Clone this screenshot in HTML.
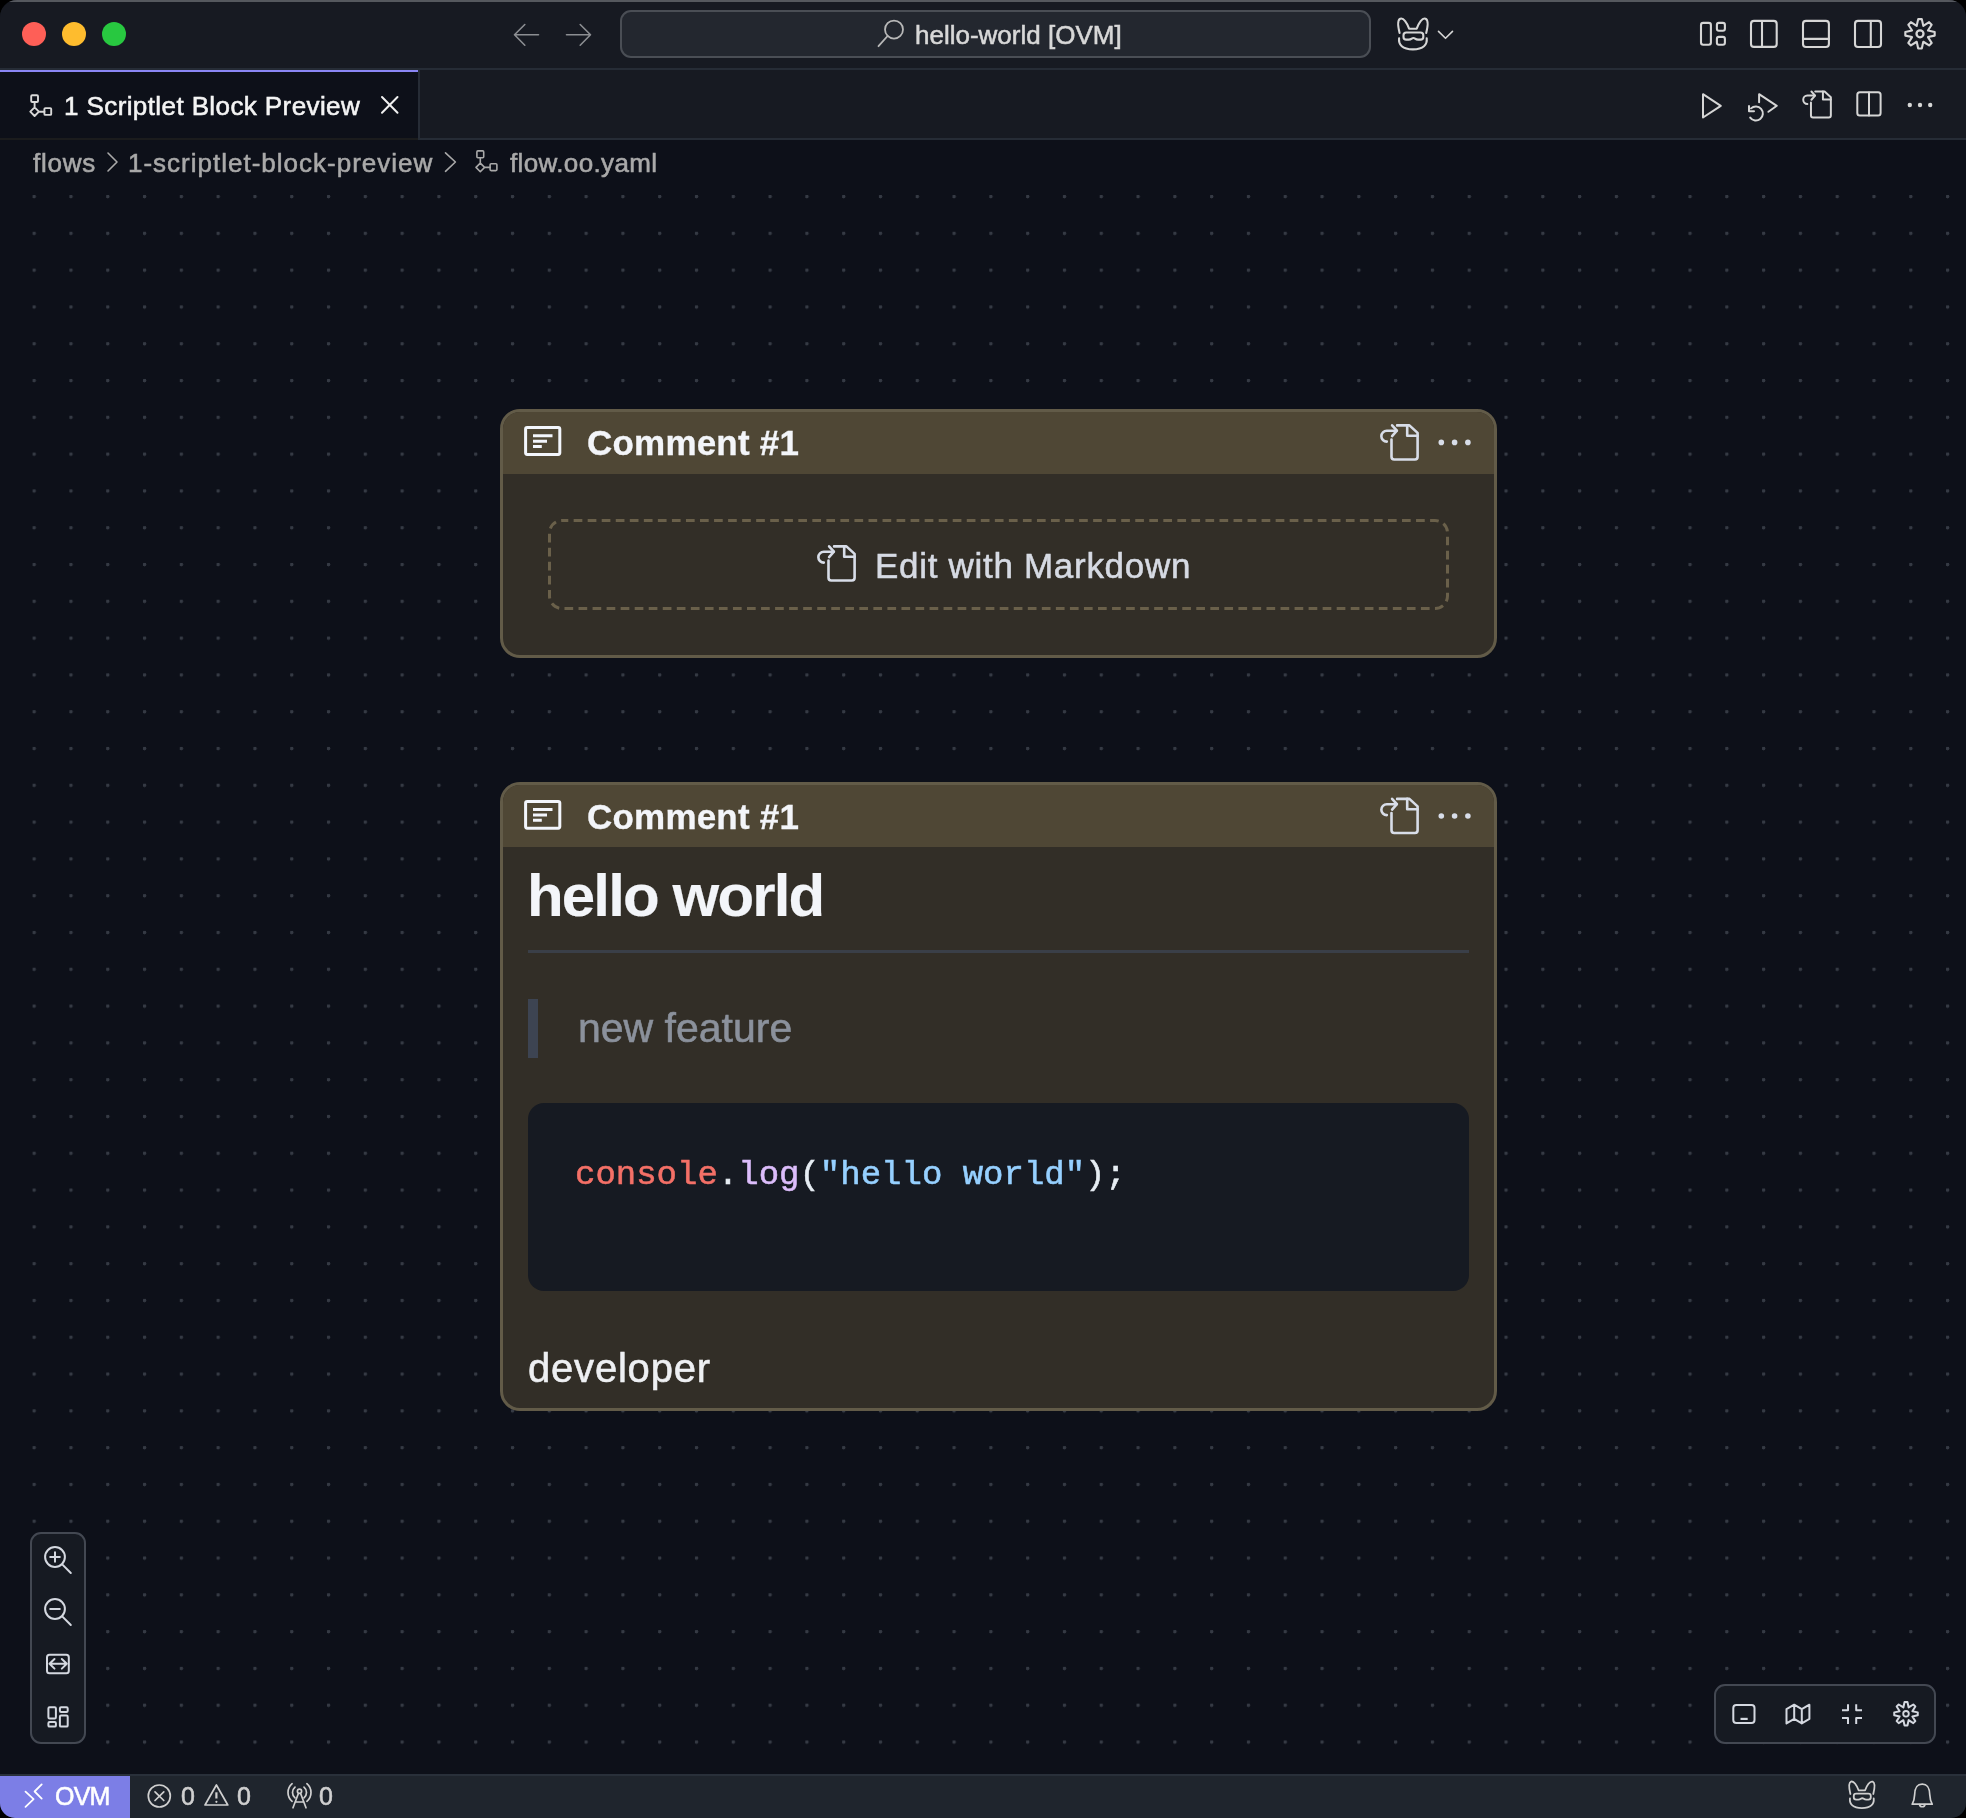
<!DOCTYPE html>
<html><head><meta charset="utf-8">
<style>
*{margin:0;padding:0;box-sizing:border-box}
html,body{width:1966px;height:1818px;background:#000;overflow:hidden;font-family:"Liberation Sans",sans-serif}
.win{position:absolute;left:0;top:0;width:1966px;height:1818px;border-radius:17px 17px 15px 15px;overflow:hidden;background:#0d1019}
.abs{position:absolute}
.t{position:absolute;white-space:pre;line-height:1;-webkit-text-stroke:0.55px currentColor;will-change:transform}
#ov{position:absolute;left:0;top:0;width:1966px;height:1818px}
.s{fill:none;stroke-linecap:round;stroke-linejoin:round}
</style></head><body>
<div class="win">
  <!-- title bar -->
  <div class="abs" style="left:0;top:0;width:1966px;height:68px;background:#171a22"></div>
  <div class="abs" style="left:0;top:0;width:1966px;height:2px;background:#55585e"></div>
  <div class="abs" style="left:22px;top:22px;width:24px;height:24px;border-radius:50%;background:#fe5f57"></div>
  <div class="abs" style="left:62px;top:22px;width:24px;height:24px;border-radius:50%;background:#febc2e"></div>
  <div class="abs" style="left:102px;top:22px;width:24px;height:24px;border-radius:50%;background:#28c840"></div>

  <!-- tab bar -->
  <div class="abs" style="left:0;top:68px;width:1966px;height:2px;background:#262c36"></div>
  <div class="abs" style="left:0;top:70px;width:1966px;height:68px;background:#171a22"></div>
  <div class="abs" style="left:0;top:138px;width:1966px;height:2px;background:#262c36"></div>
  <div class="abs" style="left:0;top:70px;width:418px;height:70px;background:#0d1019"></div>
  <div class="abs" style="left:0;top:138px;width:418px;height:2px;background:#1b1c1d"></div>
  <div class="abs" style="left:418px;top:70px;width:2px;height:70px;background:#262c36"></div>
  <div class="abs" style="left:0;top:70px;width:418px;height:2px;background:#8a86f5"></div>
  <div class="t" style="left:64px;top:93px;font-size:26px;letter-spacing:0.4px;color:#f4f4f4">1 Scriptlet Block Preview</div>

  <!-- breadcrumb -->
  <div class="t" style="left:32.5px;top:149.5px;font-size:26px;letter-spacing:0.75px;color:#a9a9a9">flows</div>
  <div class="t" style="left:128px;top:149.5px;font-size:26px;letter-spacing:1px;color:#a9a9a9">1-scriptlet-block-preview</div>
  <div class="t" style="left:509.5px;top:149.5px;font-size:26px;letter-spacing:0.36px;color:#a9a9a9">flow.oo.yaml</div>

  <!-- canvas dots -->
  <div class="abs" style="left:0;top:178px;width:1966px;height:1596px;background-image:radial-gradient(circle at 1.6px 1.6px,#353a44 1.5px,transparent 2.1px);background-size:36.8px 36.8px;background-position:32.6px 17px"></div>

  <!-- search -->
  <div class="abs" style="left:620px;top:10px;width:751px;height:48px;border-radius:11px;background:#23272f;border:2px solid #4a4e55"></div>
  <div class="t" style="left:914.5px;top:22px;font-size:26px;color:#d8d8d8">hello-world [OVM]</div>

  <!-- card 1 -->
  <div class="abs" style="left:500px;top:409px;width:997px;height:249px;border-radius:20px;background:#322e27;border:3px solid #625b48;overflow:hidden">
    <div class="abs" style="left:0;top:0;width:100%;height:62px;background:#4f4735"></div>
  </div>
  <div class="t" style="left:586.5px;top:425.4px;font-size:35px;letter-spacing:0.2px;font-weight:700;-webkit-text-stroke:0.3px currentColor;color:#f3f5f9">Comment #1</div>
  
  <div class="t" style="left:875px;top:548.1px;font-size:35px;letter-spacing:0.7px;color:#d6dae3">Edit with Markdown</div>

  <!-- card 2 -->
  <div class="abs" style="left:500px;top:782px;width:997px;height:629px;border-radius:20px;background:#322e27;border:3px solid #625b48;overflow:hidden">
    <div class="abs" style="left:0;top:0;width:100%;height:62px;background:#4f4735"></div>
  </div>
  <div class="t" style="left:586.5px;top:799px;font-size:35px;letter-spacing:0.2px;font-weight:700;-webkit-text-stroke:0.3px currentColor;color:#f3f5f9">Comment #1</div>
  <div class="t" style="left:527px;top:866.2px;font-size:60px;letter-spacing:-1.85px;font-weight:700;-webkit-text-stroke:0.15px currentColor;color:#f3f5f9">hello world</div>
  <div class="abs" style="left:528px;top:950px;width:941px;height:3px;background:#3a3f48"></div>
  <div class="abs" style="left:528px;top:999px;width:10px;height:59px;background:#3d4452"></div>
  <div class="t" style="left:577.5px;top:1008px;font-size:41px;color:#8b919c">new feature</div>
  <div class="abs" style="left:528px;top:1103px;width:941px;height:188px;border-radius:16px;background:#161a22"></div>
  <div class="t" style="left:574.5px;top:1157.8px;font-size:34px;font-family:'Liberation Mono',monospace;color:#e6edf3"><span style="color:#f47067">console</span>.<span style="color:#dcbdfb">log</span>(<span style="color:#96d0ff">"hello world"</span>);</div>
  <div class="t" style="left:528px;top:1348px;font-size:40px;letter-spacing:0.8px;color:#eef0f3">developer</div>

  <!-- zoom controls -->
  <div class="abs" style="left:29px;top:1737px;width:9px;height:9px;background:#0d1019"></div>
  <div class="abs" style="left:30px;top:1532px;width:56px;height:212px;border-radius:11px;background:#161a22;border:2px solid #434852"></div>
  <!-- bottom-right controls -->
  <div class="abs" style="left:1714px;top:1684px;width:222px;height:60px;border-radius:11px;background:#161a22;border:2px solid #434852"></div>

  <!-- status bar -->
  <div class="abs" style="left:0;top:1774px;width:1966px;height:44px;background:#1f252d;border-top:2px solid #29303a"></div>
  <div class="abs" style="left:0;top:1776px;width:130px;height:42px;background:#7c7ee6"></div>
  <div class="t" style="left:55px;top:1784px;font-size:25px;letter-spacing:-0.8px;color:#fff">OVM</div>
  <div class="t" style="left:181px;top:1784px;font-size:25px;color:#d0d0d0">0</div>
  <div class="t" style="left:237px;top:1784px;font-size:25px;color:#d0d0d0">0</div>
  <div class="t" style="left:319px;top:1784px;font-size:25px;color:#d0d0d0">0</div>

  <svg id="ov" width="1966" height="1818" viewBox="0 0 1966 1818">
    <defs>
      <g id="flow">
        <rect x="1" y="1" width="6.8" height="6.8" rx="1"/>
        <path d="M4.4 7.8V13.2M4.4 13.2L8.7 17.5L4.4 21.8L0.1 17.5ZM8.7 17.5H14.2"/>
        <rect x="14.2" y="13.9" width="6.8" height="6.8" rx="1"/>
      </g>
      <g id="gofile">
        <path d="M11.5 15.6V32.8Q11.5 35.5 14.2 35.5H34.9Q37.6 35.5 37.6 32.8V8.9L29.4 1.4H17.1"/>
        <path d="M27.2 1.4V11.7H37.6"/>
        <path d="M6.8 17.6A5.45 5.45 0 0 1 6.8 6.7H16.6"/>
        <path d="M12.1 1.3L16.9 6.7L12.1 12.1"/>
      </g>
      <g id="bunny">
        <path d="M2.1 15.1C0.6 9 -0.5 2 2.8 0.8C6 -0.4 9.6 5 11.6 10.8H19.2C21.2 5 24.8 -0.4 28 0.8C31.3 2 30.2 9 28.7 15.1"/>
        <path d="M8.8 14.6H23Q25.8 14.6 25.8 17.3V19Q25.8 21.7 23 21.7H20.6Q18.9 21.7 17.6 20.7Q15.9 19.5 14.2 20.7Q12.9 21.7 11.2 21.7H8.8Q6 21.7 6 19V17.3Q6 14.6 8.8 14.6Z"/>
        <path d="M1.6 20.3C0.8 27 5 31.5 15.4 31.5C25.8 31.5 30 27 29.2 20.3"/>
      </g>
      <g id="gear">
        <path d="M-1.80 -14.69 L1.80 -14.69 L3.29 -7.95 L9.11 -11.66 L11.66 -9.11 L7.95 -3.29 L14.69 -1.80 L14.69 1.80 L7.95 3.29 L11.66 9.11 L9.11 11.66 L3.29 7.95 L1.80 14.69 L-1.80 14.69 L-3.29 7.95 L-9.11 11.66 L-11.66 9.11 L-7.95 3.29 L-14.69 1.80 L-14.69 -1.80 L-7.95 -3.29 L-11.66 -9.11 L-9.11 -11.66 L-3.29 -7.95Z"/>
        <circle cx="0" cy="0" r="3.5" stroke-width="2.3"/>
      </g>
    </defs>

    <rect x="549.5" y="520.5" width="898" height="88" rx="12.5" fill="none" stroke="#6a604a" stroke-width="3" stroke-dasharray="8.7 5.34" stroke-dashoffset="2.4"/>
    <!-- title bar icons -->
    <g class="s" stroke="#8c8e92" stroke-width="1.6">
      <path d="M538.5 34.8H515M524.8 24.5L514.5 34.8L524.8 45.2"/>
      <path d="M566.5 34.8H590M580.2 24.5L590.5 34.8L580.2 45.2"/>
    </g>
    <g class="s" stroke="#b8b8b8" stroke-width="1.8">
      <circle cx="894" cy="29.6" r="9"/>
      <path d="M887.6 36L878.5 46.2"/>
    </g>
    <g class="s" stroke="#d6d6d6" stroke-width="2.1">
      <use href="#bunny" transform="translate(1397.5 17.9)"/>
      <path d="M1438.5 31.4L1445.5 38.3L1452.5 31.4" stroke-width="1.6"/>
      <rect x="1701" y="22.9" width="9.9" height="21.9" rx="2.2"/>
      <rect x="1716.9" y="22.9" width="8" height="7.9" rx="2"/>
      <rect x="1716.9" y="36.9" width="8" height="7.9" rx="2"/>
      <rect x="1751" y="20.9" width="25.7" height="26" rx="3"/>
      <path d="M1762 21V47"/>
      <rect x="1803" y="20.9" width="25.9" height="26.1" rx="3"/>
      <path d="M1803 38.9H1829"/>
      <rect x="1855" y="20.9" width="26" height="26.1" rx="3"/>
      <path d="M1870.8 21V47"/>
      <use href="#gear" transform="translate(1920 33.8)"/>
    </g>

    <!-- tab icons -->
    <g class="s" stroke="#d8d8d8" stroke-width="1.9">
      <use href="#flow" transform="translate(30.2 94.2)"/>
    </g>
    <g class="s" stroke="#f0f0f0" stroke-width="2">
      <path d="M382 97L397.5 112.8M397.5 97L382 112.8"/>
    </g>
    <g class="s" stroke="#d6d6d6" stroke-width="2">
      <path d="M1703 94.2V117.5L1720.8 105.8Z"/>
      <path d="M1759.1 102.3V94.2L1776.8 105.8L1768.4 111.8"/>
      <path d="M1750.2 117.6A7 7 0 1 0 1751 108.4"/>
      <path d="M1749 106V111.3H1754"/>
      <use href="#gofile" transform="translate(1802.2 90.5) scale(0.762)" stroke-width="2.6"/>
      <rect x="1857.3" y="92.3" width="23.3" height="23.3" rx="2.5"/>
      <path d="M1869 92.5V115.5"/>
    </g>
    <g fill="#d6d6d6">
      <circle cx="1909.8" cy="105" r="2.2"/>
      <circle cx="1920" cy="105" r="2.2"/>
      <circle cx="1930.2" cy="105" r="2.2"/>
    </g>

    <!-- breadcrumb icons -->
    <g class="s" stroke="#a9a9a9" stroke-width="1.6">
      <path d="M108 153L117 162L108 171"/>
      <path d="M445.5 152.8L455.4 162L445.5 171.3"/>
      <use href="#flow" transform="translate(475.9 149.9)"/>
    </g>

    <!-- card 1 icons -->
    <g class="s" stroke="#f3f6fc" stroke-width="3">
      <rect x="525.6" y="427.6" width="34.2" height="26.8" rx="1.6"/>
      <path d="M533 435.8H552.5M533 441.2H547M533 446.4H541.8" stroke-linecap="butt"/>
    </g>
    <g class="s" stroke="#d8dde8" stroke-width="2.6">
      <use href="#gofile" transform="translate(1380 424)"/>
      <use href="#gofile" transform="translate(817 545)"/>
    </g>
    <g fill="#d8dde8">
      <circle cx="1441.3" cy="442.4" r="2.8"/>
      <circle cx="1454.6" cy="442.4" r="2.8"/>
      <circle cx="1467.9" cy="442.4" r="2.8"/>
    </g>
    <!-- card 2 icons -->
    <g class="s" stroke="#f3f6fc" stroke-width="3">
      <rect x="525.6" y="801.4" width="34.2" height="26.8" rx="1.6"/>
      <path d="M533 809.6H552.5M533 815H547M533 820.2H541.8" stroke-linecap="butt"/>
    </g>
    <g class="s" stroke="#d8dde8" stroke-width="2.6">
      <use href="#gofile" transform="translate(1380 797.5)"/>
    </g>
    <g fill="#d8dde8">
      <circle cx="1441.3" cy="816" r="2.8"/>
      <circle cx="1454.6" cy="816" r="2.8"/>
      <circle cx="1467.9" cy="816" r="2.8"/>
    </g>

    <!-- zoom controls icons -->
    <g class="s" stroke="#d4d8e0" stroke-width="2">
      <circle cx="55" cy="1557" r="9.9"/>
      <path d="M62.2 1564.4L70.8 1573M50.2 1557H59.8M55 1552.2V1561.8"/>
      <circle cx="55" cy="1609" r="9.9"/>
      <path d="M62.2 1616.4L70.8 1625M50.2 1609H59.8"/>
      <rect x="47" y="1654.8" width="21.8" height="18.4" rx="2.5"/>
      <path d="M49.5 1663.8H66.8M54.5 1659L49.5 1663.8L54.5 1668.6M61.8 1659L66.8 1663.8L61.8 1668.6"/>
      <rect x="48.4" y="1707.2" width="7.5" height="11.2" rx="1.2"/>
      <rect x="48.4" y="1722" width="7.5" height="4.6" rx="1.2"/>
      <rect x="59.9" y="1707.2" width="7.8" height="4.7" rx="1.2"/>
      <rect x="59.9" y="1715.6" width="7.8" height="11" rx="1.2"/>
    </g>

    <!-- bottom-right controls icons -->
    <g class="s" stroke="#d4d8e0" stroke-width="2">
      <rect x="1733.3" y="1705" width="21.2" height="18" rx="3"/>
      <path d="M1740.5 1718.9H1747.7" stroke-linecap="butt" stroke-width="2.2"/>
      <path d="M1786.5 1709.2L1794.2 1704.7L1801.8 1709.2L1809.4 1704.7V1718.9L1801.8 1723.4L1794.2 1718.9L1786.5 1723.4ZM1794.2 1704.7V1718.9M1801.8 1709.2V1723.4"/>
      <path d="M1848 1704.2V1710.3H1842M1856.2 1704.2V1710.3H1862M1842 1717.9H1848V1724M1862 1717.9H1856.2V1724" stroke-linecap="butt"/>
      <use href="#gear" transform="translate(1906 1713.8) scale(0.8)" stroke-width="2.5"/>
    </g>

    <!-- status bar icons -->
    <g class="s" stroke="#ffffff" stroke-width="1.8">
      <path d="M25.5 1791.6L33.6 1799.2L25.5 1806.8M41.7 1784.4L34.6 1791.5L41.7 1798.6"/>
    </g>
    <g class="s" stroke="#d0d0d0" stroke-width="1.7">
      <circle cx="159.3" cy="1796" r="11"/>
      <path d="M155 1791.8L163.8 1800.5M163.8 1791.8L155 1800.5"/>
      <path d="M216.4 1785L205 1805H227.8Z"/>
      <path d="M216.4 1792.3V1798.5" stroke-width="2.2" stroke-linecap="butt"/>
      <path d="M298.3 1793.8L293 1807.8M300.7 1793.8L306 1807.8M295.2 1802H303.8"/>
      <circle cx="299.5" cy="1791.3" r="2.1"/>
      <path d="M295.00 1787.14A7 7 0 0 0 295.00 1797.86M304.00 1787.14A7 7 0 0 1 304.00 1797.86"/>
      <path d="M292.11 1783.69A11.5 11.5 0 0 0 292.11 1801.31M306.89 1783.69A11.5 11.5 0 0 1 306.89 1801.31"/>
      <use href="#bunny" transform="translate(1848.6 1781) scale(0.86)" stroke-width="2.1"/>
      <path d="M1922.2 1784.2C1915.5 1784.2 1914.8 1790 1914.6 1795C1914.4 1799.5 1913.5 1802 1912.2 1804.2H1932.2C1930.9 1802 1930 1799.5 1929.8 1795C1929.6 1790 1928.9 1784.2 1922.2 1784.2Z"/>
      <path d="M1919.5 1804.5A2.8 2.8 0 0 0 1925 1804.5"/>
    </g>
    <g fill="#d0d0d0">
      <circle cx="216.4" cy="1801.8" r="1.1"/>
    </g>
  </svg>
</div>
</body></html>
